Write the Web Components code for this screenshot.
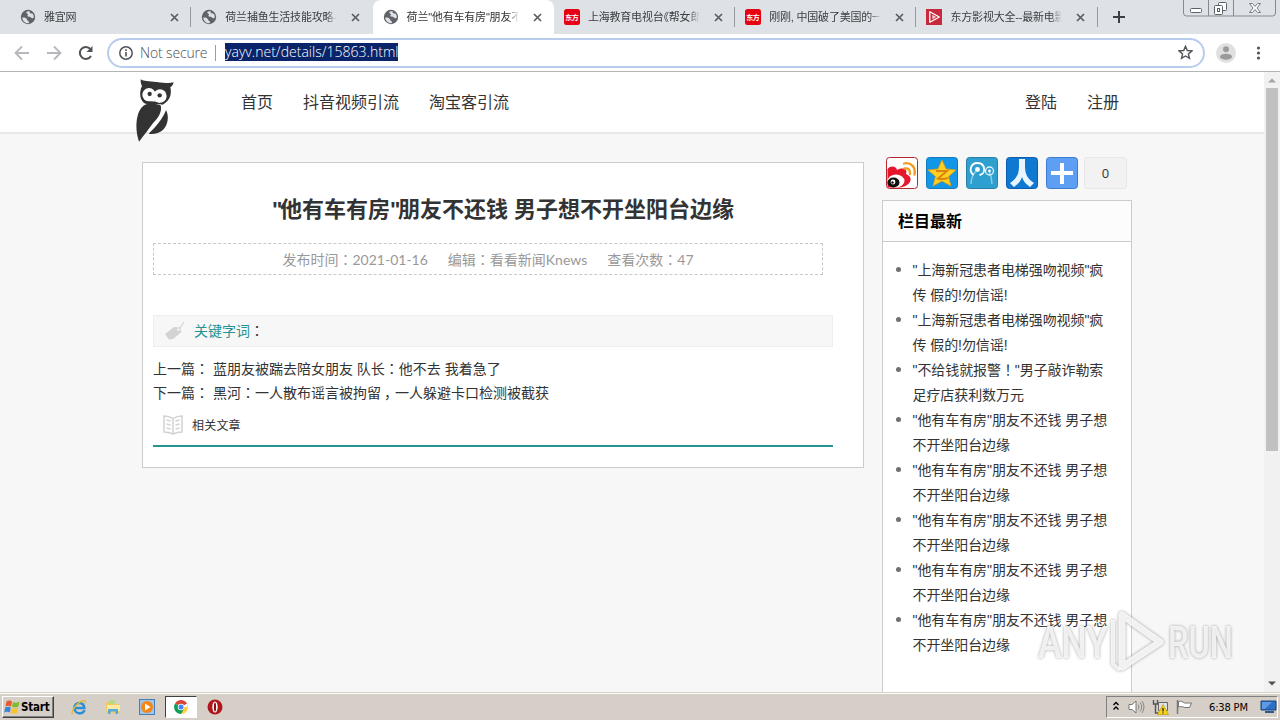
<!DOCTYPE html>
<html lang="zh-CN">
<head>
<meta charset="UTF-8">
<title>雅宜网</title>
<style>
    :root {
        --cjk: "Liberation Sans", "Noto Sans CJK SC", sans-serif;
        --teal: #269393;
        --line: #ccc;
    }
    body {
        margin: 0;
        width: 1280px;
        height: 720px;
        overflow: hidden;
        font-family: var(--cjk);
        color: #333;
    }
</style>
</head>
<body>
<desktop-screen></desktop-screen>
<script>
// Data
const tabs = [
    { title: '雅宜网', icon: 'globe' },
    { title: '荷兰捕鱼生活技能攻略-事', icon: 'globe' },
    { title: '荷兰"他有车有房"朋友不还', icon: 'globe', active: true },
    { title: '上海教育电视台《帮女郎》', icon: 'east' },
    { title: '刚刚, 中国破了美国的一', icon: 'east' },
    { title: '东方影视大全--最新电影', icon: 'play' }
];

const latest = [
    ['"上海新冠患者电梯强吻视频"疯', '传 假的!勿信谣!'],
    ['"上海新冠患者电梯强吻视频"疯', '传 假的!勿信谣!'],
    ['"不给钱就报警！"男子敲诈勒索', '足疗店获利数万元'],
    ['"他有车有房"朋友不还钱 男子想', '不开坐阳台边缘'],
    ['"他有车有房"朋友不还钱 男子想', '不开坐阳台边缘'],
    ['"他有车有房"朋友不还钱 男子想', '不开坐阳台边缘'],
    ['"他有车有房"朋友不还钱 男子想', '不开坐阳台边缘'],
    ['"他有车有房"朋友不还钱 男子想', '不开坐阳台边缘']
];

// Full-width punctuation sits in the middle of its cell
const punct = text => text
    .replace(/[：！]/g, m => `<span class="mid" lang="zh-TW">${m}</span>`)
    .replace(/，/g, '<span class="comma">，</span>')
    .replace(/《/g, '<span class="half">《</span>');

const punctStyle = `
    .mid { font-family: "Noto Sans CJK TC", sans-serif; line-height: 1; }
    .comma { padding-left: 3px; letter-spacing: -3px; }
    .half { font-family: "Noto Sans CJK SC", sans-serif; font-feature-settings: "halt"; line-height: 1; }
`;

const favicons = {
    globe: `<svg width="16" height="16" viewBox="0 0 16 16"><circle cx="8" cy="8" r="7.2" fill="#5f6368"/><path d="M2.2 8.5c1.8-.3 3.4.1 4.4 1.2.8.9.4 1.9 1.6 2.2.9.2 1 .9.4 2.3A6 6 0 0 1 2.2 8.5zM6.2 3.5c1-1.2 2.3-1.3 3.6-1.1-.3 1-.2 1.5.6 1.8.9.3 1.8.2 2.4.6a6 6 0 0 1 1 4c-1 .8-2.2.5-2.9-.3-.6-.8-1.8-.6-2.8-.9-1-.3-.9-1.4-.2-1.9.8-.5-.5-.8-1-1.100z" fill="#dee1e6"/></svg>`,
    east: `<svg width="16" height="16" viewBox="0 0 16 16"><rect width="16" height="16" rx="2.500" fill="#e60012"/><text x="1.200" y="10.800" font-size="7" font-weight="700" font-family="Noto Sans CJK SC, sans-serif" fill="#fff" textLength="13.600">东方</text></svg>`,
    play: `<svg width="16" height="16" viewBox="0 0 16 16"><rect width="16" height="16" fill="#c62a3c"/><path d="M3.800 2.800v10.400L13.300 8z" fill="none" stroke="#fff" stroke-width="1.300" stroke-linejoin="round"/><path d="M6.300 5.700v4.600L10.300 8z" fill="#f6c9cd"/></svg>`
};

const shareIcons = [
    // weibo
    `<rect x=".5" y=".5" width="31" height="31" rx="3" fill="#fff" stroke="#b3282d"/>
     <path d="M1.500 12c3-4 9-3 9.500 1 6-3 11-1 9 4 6 2 6 8 1 11-3 2-6 2.500-9 2.500H1.500z" fill="#e6162d"/>
     <ellipse cx="10" cy="24" rx="8.500" ry="6.500" fill="#fff"/><ellipse cx="7.500" cy="25.500" rx="6" ry="5" fill="#111"/><circle cx="7" cy="25" r="2.400" fill="#fff"/><circle cx="6.500" cy="25.500" r="1.200" fill="#111"/>
     <path d="M18 6.500c7-1.500 12 3.500 10.500 11M18.500 11.500c4-.5 6 1.500 5.500 5.500" fill="none" stroke="#f39b1f" stroke-width="2.300" stroke-linecap="round"/>`,
    // qzone
    `<rect x=".5" y=".5" width="31" height="31" rx="3" fill="#1296e8" stroke="#1379bd"/>
     <path d="M16 3l4 9 10 1-7.500 6.500L25 29l-9-5-9 5 2.500-9.500L2 13l10-1z" fill="#ffcf21" stroke="#e69b0a" stroke-width=".8"/>
     <path d="M10 14h11l-9 7.500c3 .8 7 .5 10-.5" fill="none" stroke="#d9850b" stroke-width="2"/>`,
    // tencent weibo
    `<rect x=".5" y=".5" width="31" height="31" rx="3" fill="#2f9fd0" stroke="#2580ab"/>
     <path d="M5 27c0-6 2-10 6-14M26 27c0-5-1-9-3-13" fill="none" stroke="#8ccbe6" stroke-width="1.500"/>
     <path d="M7.500 18c-5-4-3-12 4-12 8 0 9 11 2 12" fill="none" stroke="#fff" stroke-width="1.800"/><circle cx="11.500" cy="12.500" r="2.400" fill="#fff"/>
     <circle cx="23.500" cy="14" r="4" fill="none" stroke="#d9f0fa" stroke-width="1.400"/><circle cx="23.500" cy="14" r="1.400" fill="#fff"/>`,
    // renren
    `<rect x=".5" y=".5" width="31" height="31" rx="3" fill="#0f78d0" stroke="#0e5cae"/>
     <path d="M13 2h6v7c0 9 3 13 9 17l-4 4c-4-3-7-6-8-10-1 4-4 7-8 10l-4-4c6-4 9-8 9-17z" fill="#e8f5ff"/>`,
    // more
    `<rect x=".5" y=".5" width="31" height="31" rx="3" fill="#5f9ff3" stroke="#3d7dcf"/>
     <path d="M14 6h4v8h9v4h-9v9h-4v-9H5v-4h9z" fill="#fff"/>`
];

class DesktopScreen extends HTMLElement {
    constructor() {
        super();
        this.attachShadow({ mode: 'open' }).innerHTML = `
            <style>
                :host { display: flex; flex-direction: column; height: 720px; position: relative; }
                .view { display: flex; height: 620px; background: #f7f7f7; overflow: hidden; }
                main { flex: 1; min-width: 0; }
                .columns { display: flex; gap: 18px; padding: 23px 0 0 142px; align-items: flex-start; }
                site-article { margin-top: 5px; }
                any-run { position: absolute; left: 1030px; top: 604px; }
                .q { letter-spacing: -2.400px; }
                ${punctStyle}
            </style>
            <tab-strip></tab-strip>
            <address-bar url="yayv.net/details/15863.html"></address-bar>
            <div class="view">
                <main>
                    <site-header></site-header>
                    <div class="columns">
                        <site-article>
                            <span slot="title"><span class="q">"</span>他有车有房<span class="q">"</span>朋友不还钱 男子想不开坐阳台边缘</span>
                            <span slot="date">${punct('发布时间：2021-01-16')}</span>
                            <span slot="editor">${punct('编辑：看看新闻Knews')}</span>
                            <span slot="views">${punct('查看次数：47')}</span>
                            <span slot="prev">${punct('蓝朋友被踹去陪女朋友 队长：他不去 我着急了')}</span>
                            <span slot="next">${punct('黑河：一人散布谣言被拘留，一人躲避卡口检测被截获')}</span>
                        </site-article>
                        <site-sidebar></site-sidebar>
                    </div>
                </main>
                <scroll-bar></scroll-bar>
            </div>
            <task-bar></task-bar>
            <any-run></any-run>
        `;
    }
}

class BrowserTab extends HTMLElement {
    connectedCallback() {
        this.attachShadow({ mode: 'open' }).innerHTML = `
            <style>
                :host { display: flex; align-items: center; box-sizing: border-box; width: 181.300px; height: 34px; padding-left: 10px; color: #3c4043; }
                :host([active]) { background: #fff; border-radius: 8px 8px 0 0; color: #333; }
                .icon { display: flex; width: 16px; margin-right: 8px; }
                .title { width: 112px; height: 20px; overflow: hidden; white-space: nowrap; font-size: 11px; line-height: 20px; letter-spacing: -.2px;
                    -webkit-mask-image: linear-gradient(90deg, #000 90%, transparent); mask-image: linear-gradient(90deg, #000 90%, transparent); }
                .close { display: flex; margin-left: 14px; }
                .sep { width: 1px; height: 20px; margin-left: auto; background: #9599a0; }
                :host([nosep]) .sep { visibility: hidden; }
            </style>
            <span class="icon">${favicons[this.getAttribute('icon')]}</span>
            <span class="title"><slot></slot></span>
            <svg class="close" width="9" height="9" viewBox="0 0 9 9"><path d="M1 1l7 7M8 1L1 8" stroke="#5a5e63" stroke-width="1.700"/></svg>
            <span class="sep"></span>
        `;
    }
}

class TabStrip extends HTMLElement {
    constructor() {
        super();
        const items = tabs.map((t, i) => `<browser-tab icon="${t.icon}" ${t.active ? 'active' : ''} ${i === 1 || i === 2 ? 'nosep' : ''}>${punct(t.title)}</browser-tab>`).join('');
        this.attachShadow({ mode: 'open' }).innerHTML = `
            <style>
                :host { display: flex; height: 34px; padding-left: 10px; background: #dee1e6; box-sizing: border-box; }
                .plus { margin: 11px 0 0 15px; }
                .win { margin: 0 3px 0 auto; }
                ${punctStyle}
            </style>
            ${items}
            <svg class="plus" width="12" height="12" viewBox="0 0 12 12"><path d="M6 0v12M0 6h12" stroke="#3c4043" stroke-width="2"/></svg>
            <svg class="win" width="94" height="17" viewBox="0 0 94 17" fill="none" stroke="#858992">
                <path d="M.5 0v13q0 3 3 3h86q3 0 3-3V0M25.500 0v16M50.500 0v16"/>
                <rect x="7.500" y="8.500" width="11" height="4" rx="1" fill="#fff" stroke="#5c6068"/>
                <rect x="35.500" y="2.500" width="8" height="8" rx="1" fill="#fff" stroke="#5c6068"/>
                <rect x="31.500" y="5.500" width="8" height="9" rx="1" fill="#fff" stroke="#5c6068"/><rect x="34.500" y="8.500" width="2" height="3" stroke="#5c6068"/>
                <path d="M66.500 3.500h3l2.500 3 2.500-3h3l-3.500 4.500 3.500 4.500h-3l-2.500-3-2.500 3h-3L70 8z" fill="#fff" stroke="#777b83"/>
            </svg>
        `;
    }
}

class AddressBar extends HTMLElement {
    connectedCallback() {
        this.attachShadow({ mode: 'open' }).innerHTML = `
            <style>
                :host { display: flex; align-items: center; box-sizing: border-box; height: 38px; padding: 0 9px 0 14px; border-bottom: 1px solid #b4b4b4; background: #fff; font-family: "Open Sans", "Noto Sans", sans-serif; font-size: 14px; }
                .nav { display: flex; gap: 16px; margin-right: 13px; }
                .box { display: flex; align-items: center; box-sizing: border-box; width: 1098px; height: 30px; padding: 0 10px; border: 2px solid #b8cdec; border-radius: 15px; }
                .secure { margin: -1px 8px 0 7px; font-weight: 300; color: #4c5054; letter-spacing: -.15px; width: 67px; white-space: nowrap; }
                .sep { width: 1px; height: 16px; background: #9a9da1; margin-right: 9px; }
                .url { background: #0a246a; color: #fff; font-weight: 300; line-height: 18px; height: 18px; margin-top: -1px; width: 173px; white-space: nowrap; letter-spacing: .02px; }
                .star { margin-left: auto; }
                .user { margin: 0 20px 0 11px; }
            </style>
            <span class="nav">
                <svg width="16" height="16" viewBox="0 0 16 16" fill="none" stroke="#b5b7ba" stroke-width="1.800"><path d="M15 8H2M8 1.500L1.500 8 8 14.500"/></svg>
                <svg width="16" height="16" viewBox="0 0 16 16" fill="none" stroke="#b5b7ba" stroke-width="1.800"><path d="M1 8h13M8 1.500L14.500 8 8 14.500"/></svg>
                <svg width="16" height="16" viewBox="0 0 16 16"><path d="M13 11a6 6 0 1 1-.6-7" fill="none" stroke="#505458" stroke-width="2"/><path d="M14.500 1v6h-6z" fill="#505458"/></svg>
            </span>
            <div class="box">
                <svg width="14" height="14" viewBox="0 0 14 14"><circle cx="7" cy="7" r="6.200" fill="none" stroke="#505458" stroke-width="1.500"/><path d="M7 6v4.500M7 3.300v1.600" stroke="#505458" stroke-width="1.600"/></svg>
                <span class="secure">Not secure</span><span class="sep"></span><span class="url">${this.getAttribute('url')}</span>
                <svg class="star" width="15" height="15" viewBox="0 0 15 15"><path d="M7.500 1.300l1.800 4.200 4.600.4-3.500 3 1.100 4.500-4-2.400-4 2.400 1.100-4.500-3.500-3 4.600-.4z" fill="none" stroke="#505458" stroke-width="1.400"/></svg>
            </div>
            <svg class="user" width="20" height="20" viewBox="0 0 20 20"><circle cx="10" cy="10" r="10" fill="#e0e0e0"/><circle cx="10" cy="6.300" r="3" fill="#9b9b9b"/><ellipse cx="10" cy="13.700" rx="6" ry="3" fill="#9b9b9b"/></svg>
            <svg width="5" height="14" viewBox="0 0 5 14" fill="#505458"><circle cx="2.500" cy="2" r="1.600"/><circle cx="2.500" cy="7" r="1.600"/><circle cx="2.500" cy="12" r="1.600"/></svg>
        `;
    }
}

class SiteHeader extends HTMLElement {
    constructor() {
        super();
        this.attachShadow({ mode: 'open' }).innerHTML = `
            <style>
                :host { display: flex; align-items: flex-start; box-sizing: border-box; height: 62px; padding: 0 145px 0 136px; background: #fff; border-bottom: 2px solid #e8e8e8; font-size: 16px; line-height: 62px; }
                .logo { flex: none; margin: 7px 67px 0 0; }
                nav { display: flex; gap: 30px; height: 60px; }
                .right { margin-left: auto; }
            </style>
            <svg class="logo" width="38" height="63" viewBox="48 19 114 189">
                <g fill="#333"><path d="M62 20c10 6 23 6 48 8 25 3 38 5 51 1-2 9-6 12-10 15 5 21-1 41-23 52-18-4-38-1-52-3C60 85 56 60 66 40c-4-8-4-12-4-20z"/>
                <path d="M75 96c10-4 30-4 46 1 7 13-3 38-21 53-15 20-30 40-43 57-9-27-11-57-2-85 5-14 13-22 20-26z"/>
                <path d="M138 112c10 18 7 48-13 63-12 8-25 10-39 8 19-18 42-43 52-71z"/></g>
                <g fill="#fff"><ellipse cx="87" cy="66" rx="20" ry="20"/><ellipse cx="120" cy="70" rx="20" ry="20"/><path d="M90 72h30v18q-16-4-30-4z"/></g>
                <circle cx="89" cy="64" r="6.500" fill="#333"/><circle cx="119" cy="68" r="6.500" fill="#333"/>
            </svg>
            <nav><span>首页</span><span>抖音视频引流</span><span>淘宝客引流</span></nav>
            <nav class="right"><span>登陆</span><span>注册</span></nav>
        `;
    }
}

class SiteArticle extends HTMLElement {
    constructor() {
        super();
        this.attachShadow({ mode: 'open' }).innerHTML = `
            <style>
                :host { display: block; box-sizing: border-box; width: 722px; height: 306px; padding: 27px 10px 0; background: #fff; border: 1px solid var(--line); font-size: 14px; white-space: nowrap; }
                h1 { margin: 0 0 13px; height: 40px; line-height: 40px; text-align: center; font-size: 22px; }
                .meta { display: flex; justify-content: center; gap: 20px; box-sizing: border-box; width: 670px; height: 32px; line-height: 32px; border: 1px dashed #c8c8c8; color: #999; font-family: Lato, "Noto Sans CJK SC", sans-serif; }
                .keys { display: flex; align-items: center; box-sizing: border-box; width: 680px; height: 32px; margin: 40px 0 10px; padding: 0 0 2px 10px; background: #f7f7f7; border: 1px solid #eee; }
                .keys svg { margin: 2px 9px 0 0; }
                .keys .name { color: var(--teal); }
                .row { height: 24px; line-height: 24px; }
                .related { display: flex; align-items: center; width: 680px; height: 40px; border-bottom: 2px solid var(--teal); font-size: 12px; letter-spacing: .2px; }
                .related svg { margin: 0 9px 0 10px; }
                .related span { margin-top: -2px; }
                ${punctStyle}
            </style>
            <h1><slot name="title"></slot></h1>
            <div class="meta"><slot name="date"></slot><slot name="editor"></slot><slot name="views"></slot></div>
            <div class="keys">
                <svg width="21" height="20" viewBox="0 0 21 20"><path d="M1 13L10 6l6 .5 1.500 4.500-8.500 7-4 .5z" fill="#d3d3d3"/><circle cx="14.500" cy="8.500" r="1.300" fill="#f7f7f7"/><path d="M15 8c2-2 3-4 5-7" fill="none" stroke="#d3d3d3" stroke-width="1.200"/></svg>
                <span class="name">关键字词</span>${punct('：')}
            </div>
            <div class="row">${punct('上一篇：')} <slot name="prev"></slot></div>
            <div class="row">${punct('下一篇：')} <slot name="next"></slot></div>
            <div class="related">
                <svg width="20" height="20" viewBox="0 0 20 20" fill="none" stroke="#d2d2d2" stroke-width="1.500"><path d="M10 3.500C7 1.500 4 1 1 1v16c3 0 6 .5 9 2 3-1.500 6-2 9-2V1c-3 0-6 .5-9 2.500zM10 3.500V19M3.500 5l4 1M3.500 9l4 1M3.500 13l4 1M16.500 5l-4 1M16.500 9l-4 1M16.500 13l-4 1"/></svg>
                <span>相关文章</span>
            </div>
        `;
    }
}

class SiteSidebar extends HTMLElement {
    constructor() {
        super();
        const rows = latest.map(l => `<li><span>${punct(l[0])}<br>${l[1]}</span></li>`).join('');
        const icons = shareIcons.map(s => `<svg width="32" height="32" viewBox="0 0 32 32">${s}</svg>`).join('');
        this.attachShadow({ mode: 'open' }).innerHTML = `
            <style>
                :host { display: block; width: 250px; }
                .share { display: flex; gap: 8px; margin: 0 0 11px 4px; }
                .count { box-sizing: border-box; width: 43px; height: 32px; margin-left: -2px; border: 1px solid #e8e8e8; border-radius: 3px; background: #f2f2f2; text-align: center; font-family: "Open Sans", sans-serif; font-size: 13px; line-height: 31px; }
                .card { box-sizing: border-box; height: 500px; border: 1px solid var(--line); background: #fff; }
                h2 { margin: 0; height: 40px; padding-left: 15px; line-height: 42px; border-bottom: 1px solid var(--line); background: #fcfcfc; color: #000; font-size: 16px; }
                ul { margin: 16px 0 0; padding: 0 0 0 13px; list-style: none; font-size: 14px; line-height: 25px; white-space: nowrap; letter-spacing: -.08px; }
                li { display: flex; }
                li::before { content: ""; width: 5px; height: 5px; margin: 9px 11.500px 0 0; border-radius: 50%; background: #707070; }
                ${punctStyle}
            </style>
            <div class="share">${icons}<span class="count">0</span></div>
            <div class="card">
                <h2>栏目最新</h2>
                <ul>${rows}</ul>
            </div>
        `;
    }
}

class ScrollBar extends HTMLElement {
    constructor() {
        super();
        this.attachShadow({ mode: 'open' }).innerHTML = `
            <style>
                :host { display: flex; flex-direction: column; align-items: center; box-sizing: border-box; width: 16px; padding: 6px 0; background: #f1f1f1; }
                .thumb { width: 12px; height: 363px; margin-top: 5px; background: #c1c1c1; }
                .down { margin-top: auto; }
            </style>
            <svg width="8" height="5" viewBox="0 0 8 5"><path d="M0 4.500h8L4 .5z" fill="#a3a3a3"/></svg>
            <div class="thumb"></div>
            <svg class="down" width="8" height="5" viewBox="0 0 8 5"><path d="M0 .5h8L4 4.500z" fill="#505050"/></svg>
        `;
    }
}

class TaskBar extends HTMLElement {
    constructor() {
        super();
        this.attachShadow({ mode: 'open' }).innerHTML = `
            <style>
                :host { display: flex; align-items: center; box-sizing: border-box; height: 28px; padding: 1px 2px 0; background: #d5cfc7; border-top: 1px solid #d5cfc7; box-shadow: inset 0 1px #fff; color: #000; font-family: "DejaVu Sans Condensed", "DejaVu Sans", sans-serif; font-size: 11px; }
                .start { display: flex; align-items: center; gap: 1px; box-sizing: border-box; width: 52px; height: 22px; padding-left: 1px; border: 1px solid; border-color: #fff #404040 #404040 #fff; box-shadow: inset -1px -1px #808080; font-weight: 700; font-size: 11.500px; letter-spacing: -.2px; }
                .apps { display: flex; align-items: center; margin-left: 17px; }
                .apps > svg { margin-right: 18px; }
                .chrome { display: flex; align-items: center; justify-content: center; box-sizing: border-box; width: 32px; height: 22px; margin: 0 10px 0 -8px; border: 1px solid; border-color: #404040 #fff #fff #404040; background: #fff; }
                .tray { display: flex; align-items: center; box-sizing: border-box; width: 172px; height: 22px; margin-left: auto; padding-left: 6px; border: 1px solid; border-color: #808080 #fff #fff #808080; }
                .time { width: 41px; margin: 0 10px 0 16px; white-space: nowrap; letter-spacing: -.15px; }
            </style>
            <div class="start">
                <svg width="16" height="16" viewBox="0 0 16 16"><path d="M2.500 2.500C5 1 6.500 1.500 8 2.500L7 7.500C5 6.500 3.500 6.500 1.500 7.500z" fill="#e9572b"/><path d="M9 3c2 1 4 1 6.500-.5l-1 5c-2 1.300-4 1.300-6.500.3z" fill="#7fba32"/><path d="M1.200 8.500c2-1 4-1 5.600 0l-1 5c-2-1-3.600-1-5.600 0z" fill="#3a86d4"/><path d="M7.800 9c2.200 1 4 1 6.500-.3l-1 5c-2.500 1.200-4.500 1.200-6.500.2z" fill="#f8c42c"/></svg>
                Start
            </div>
            <div class="apps">
                <svg width="16" height="17" viewBox="0 0 17 17"><path d="M14.500 11.500C12 16.500 4 15.500 3.500 9 4 2 13.500 2 14.200 9H5" fill="none" stroke="#2b8fd8" stroke-width="2.600"/><path d="M1.500 15.500C0 13 4 6 10 2.500c4-2.300 6-1.500 5 1.500" fill="none" stroke="#e9b827" stroke-width="1.400"/></svg>
                <svg width="16" height="16" viewBox="0 0 16 16"><path d="M1 3h5l1 2h8v9H1z" fill="#eccb62"/><path d="M2 6h13v6H2z" fill="#fae9a0"/><path d="M3 15v-5h10v5h-2.500v-2.500h-5V15z" fill="#58a9dc"/><path d="M4 1h6v4H4z" fill="#b8d98a"/></svg>
                <svg width="16" height="16" viewBox="0 0 16 16"><rect x=".5" y=".5" width="15" height="15" fill="#9fc5e9" stroke="#447eb7"/><circle cx="8" cy="8" r="6" fill="#f48618"/><path d="M6 4.500v7L11.500 8z" fill="#fff"/></svg>
                <span class="chrome"><svg width="14" height="14" viewBox="0 0 14 14"><path d="M7 7L1 3.500A7 7 0 0 1 13.060 3.500z" fill="#db4437"/><path d="M7 7h6.500L13.060 3.500A7 7 0 0 1 7 14z" fill="#ffcd40"/><path d="M7 7l-6-3.500A7 7 0 0 0 7 14l3-5.200z" fill="#0f9d58"/><circle cx="7" cy="7" r="3.300" fill="#fff"/><circle cx="7" cy="7" r="2.500" fill="#4285f4"/></svg></span>
                <svg width="16" height="16" viewBox="0 0 16 16"><circle cx="8" cy="8" r="7.500" fill="#b0161d"/><ellipse cx="8" cy="8" rx="2.700" ry="5.500" fill="#fff"/><ellipse cx="8" cy="8" rx="1.100" ry="4.500" fill="#8a0e15"/></svg>
            </div>
            <div class="tray">
                <svg width="7" height="10" viewBox="0 0 7 10" fill="none" stroke="#000" stroke-width="1.400" style="margin-top:-3px"><path d="M.5 4l2.500-2.500L5.500 4M.5 8.500L3 6l2.500 2.500"/></svg>
                <svg width="17" height="16" viewBox="0 0 17 16" style="margin-left:8px"><path d="M1 5.500h3L8 2v12l-4-3.500H1z" fill="#fff" stroke="#777"/><path d="M10 5.500q2 2.500 0 5M12 3.500q3.500 4.500 0 9M14 2q4 6 0 12" fill="none" stroke="#888"/></svg>
                <svg width="17" height="16" viewBox="0 0 17 16" style="margin-left:7px"><path d="M6.500 3.500h9v8h-9z" fill="#dbe2e8" stroke="#666"/><path d="M1.500 1v4h4V1M3.500 5v9h3" fill="none" stroke="#555" stroke-width="1.400"/><path d="M11 5.500l5.500 10h-11z" fill="#f5d21c" stroke="#c79c05" stroke-width=".7"/><path d="M11 9v3.500M11 13.500v1" stroke="#222" stroke-width="1.300"/></svg>
                <svg width="17" height="16" viewBox="0 0 17 16" style="margin-left:7px"><path d="M1.500 1v14" stroke="#777" stroke-width="1.500"/><path d="M2.500 2.500c3-1 4 .5 6 1.500h7l-2 4.500H9c-2-.5-3-1.500-6.500-.5z" fill="#fff" stroke="#777"/></svg>
                <span class="time">6:38 PM</span>
                <svg width="17" height="14" viewBox="0 0 17 14"><path d="M1 1h15v9H1z" fill="#2d6fc5" stroke="#174681"/><path d="M2 2h10L5 9H2z" fill="#5d9ce2"/><path d="M5 12h9" stroke="#315a8c" stroke-width="2"/></svg>
            </div>
        `;
    }
}

class AnyRun extends HTMLElement {
    constructor() {
        super();
        this.attachShadow({ mode: 'open' }).innerHTML = `
            <style>
                :host { display: block; width: 240px; height: 74px; pointer-events: none; }
                svg { display: block; filter: drop-shadow(0 0 1.500px rgba(0, 0, 0, .45)); }
                text { font: 500 45px Roboto, "Liberation Sans", sans-serif; fill: #fff; fill-opacity: .8; }
            </style>
            <svg width="240" height="74" viewBox="0 0 240 74">
                <text x="8" y="54" textLength="70" lengthAdjust="spacingAndGlyphs">ANY</text>
                <path d="M92 11v52l38-25z" fill="none" stroke="#fff" stroke-opacity=".85" stroke-width="7" stroke-linejoin="round"/>
                <path d="M83 16v44l7 6" fill="none" stroke="#fff" stroke-opacity=".8" stroke-width="4"/>
                <text x="138" y="54" textLength="65" lengthAdjust="spacingAndGlyphs">RUN</text>
            </svg>
        `;
    }
}

customElements.define('browser-tab', BrowserTab);
customElements.define('tab-strip', TabStrip);
customElements.define('address-bar', AddressBar);
customElements.define('site-header', SiteHeader);
customElements.define('site-article', SiteArticle);
customElements.define('site-sidebar', SiteSidebar);
customElements.define('scroll-bar', ScrollBar);
customElements.define('task-bar', TaskBar);
customElements.define('any-run', AnyRun);
customElements.define('desktop-screen', DesktopScreen);
</script>
</body>
</html>
